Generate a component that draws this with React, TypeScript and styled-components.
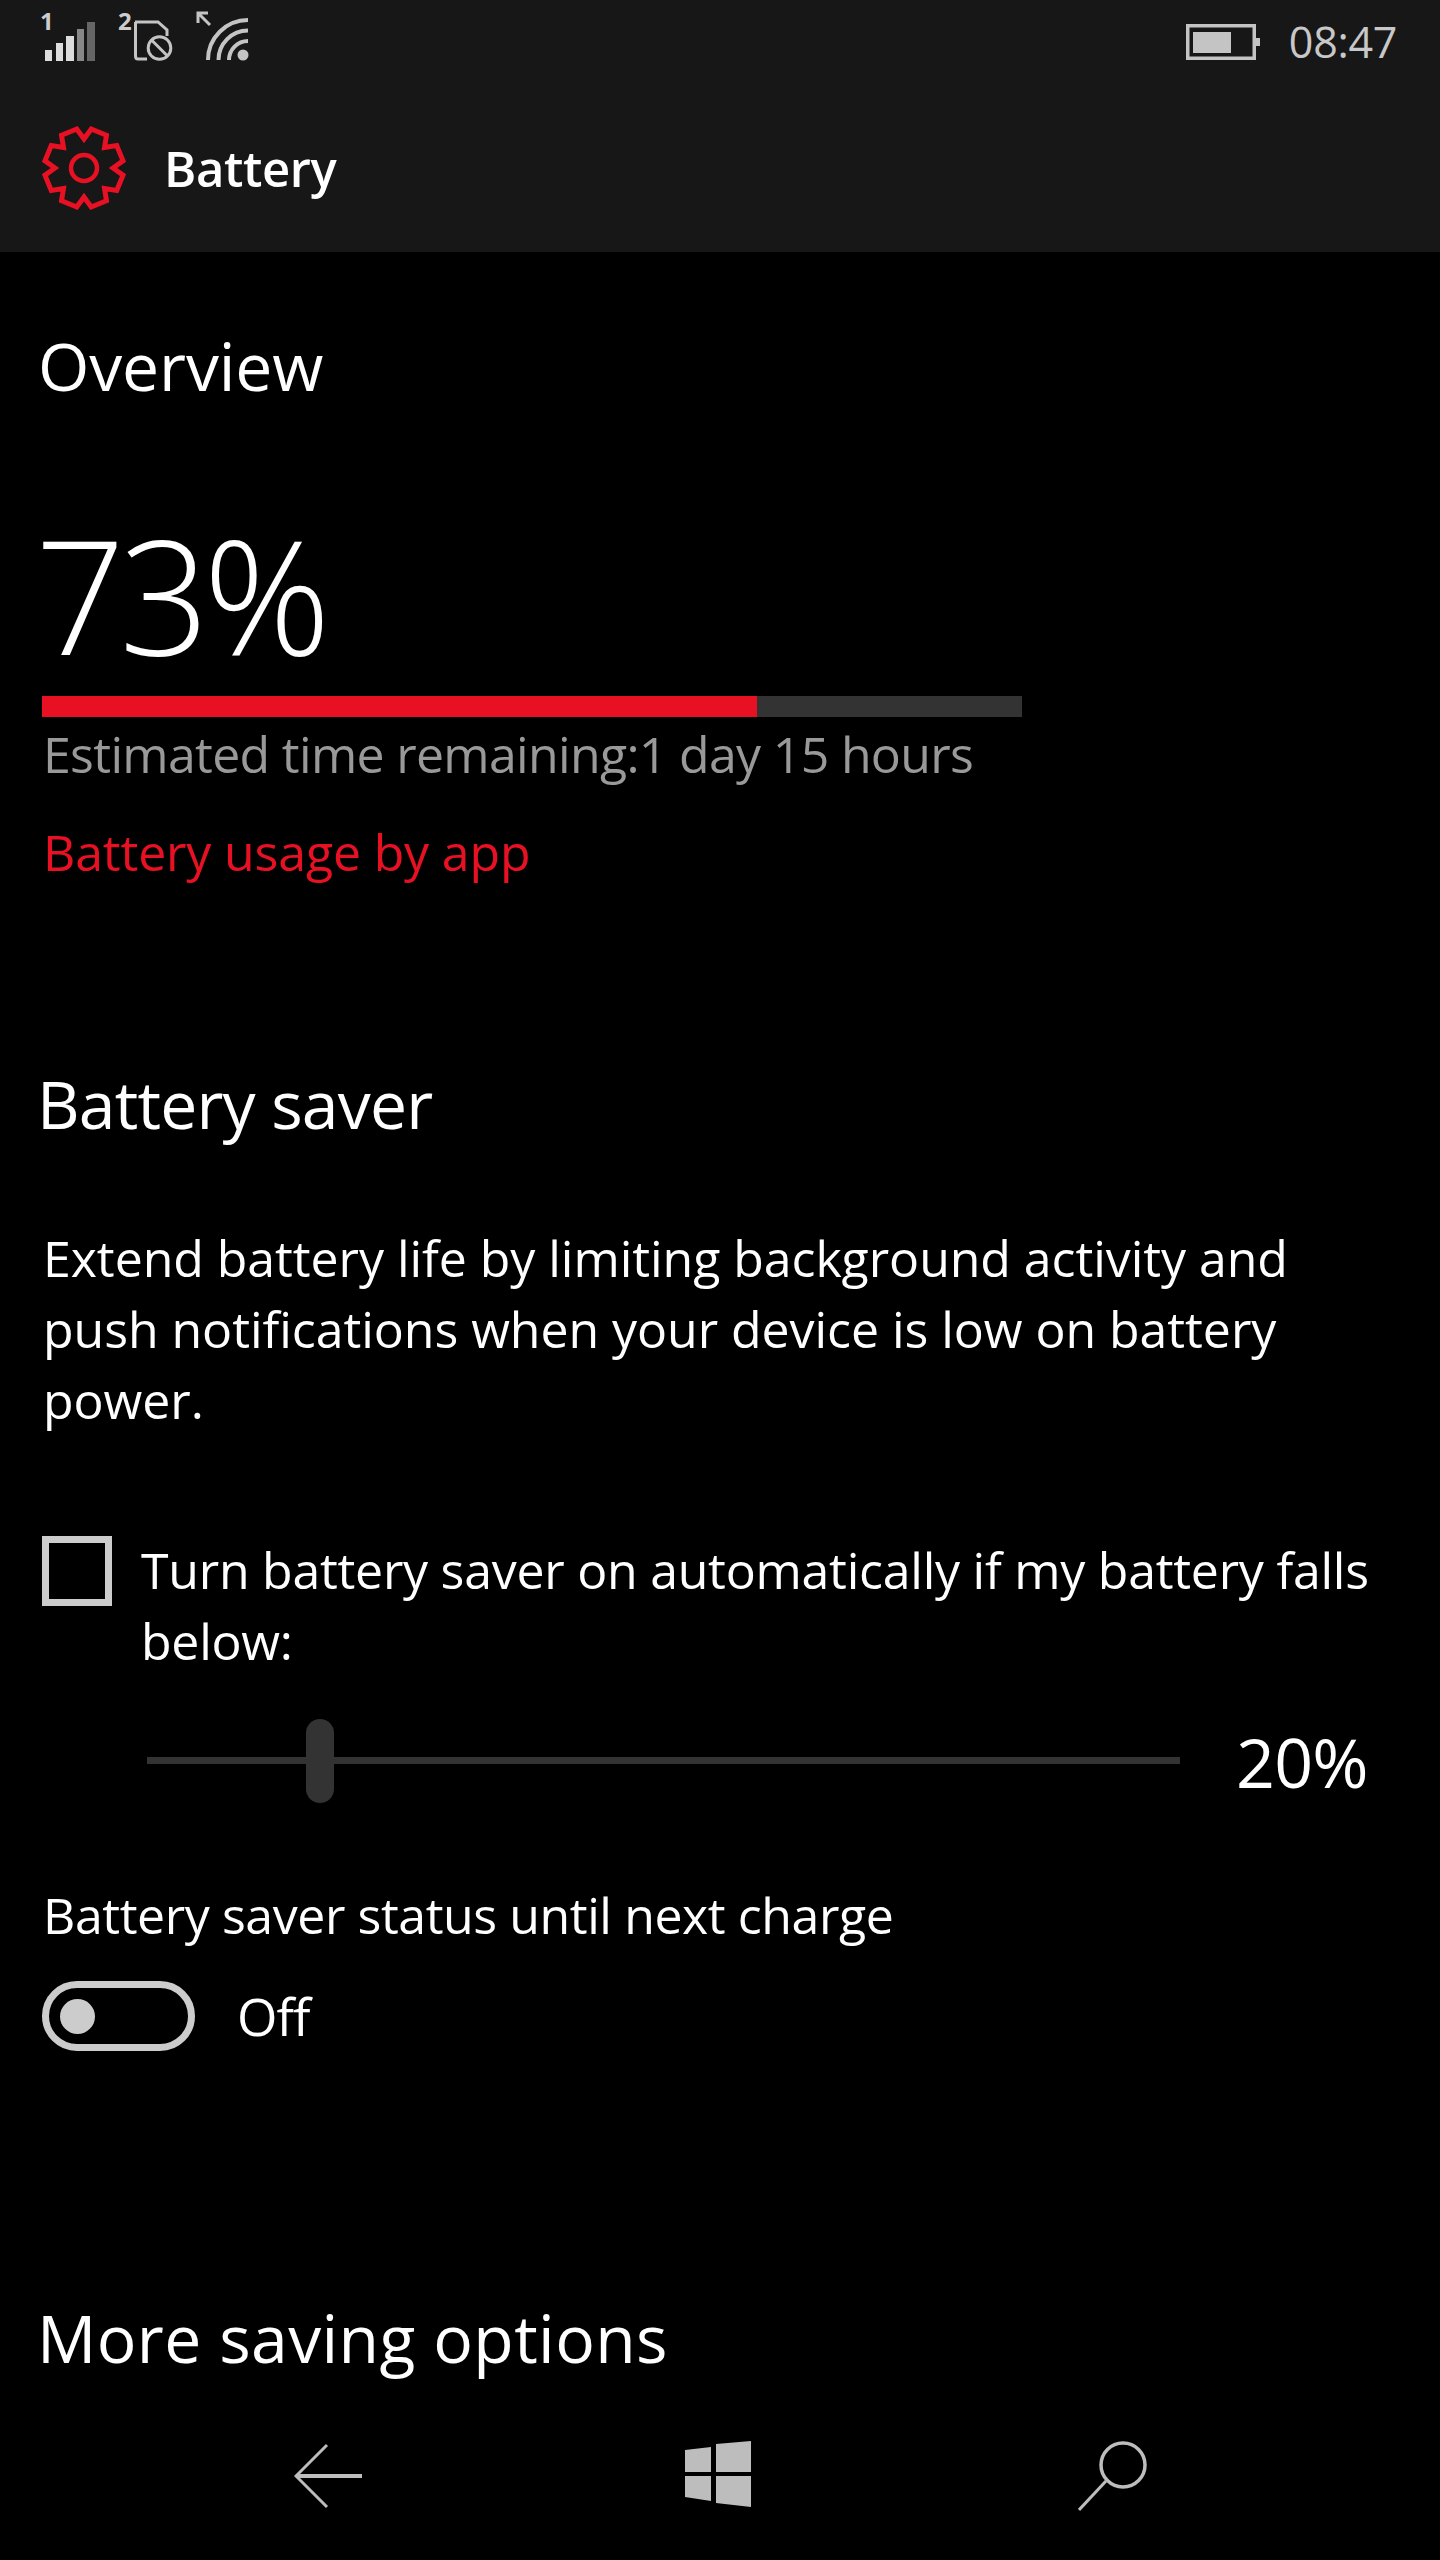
import React from "react";
import styled, { createGlobalStyle } from "styled-components";

const Global = createGlobalStyle`
  html, body { margin: 0; padding: 0; background: #000; }
  * { box-sizing: border-box; }
`;

const RED = "#e81123";
const font = `"Open Sans", "Noto Sans", "Liberation Sans", sans-serif`;

const Page = styled.div`
  width: 1440px;
  height: 2560px;
  display: flex;
  flex-direction: column;
  background: #000;
  color: #fff;
  font-family: ${font};
  overflow: hidden;
`;
const Header = styled.header`
  height: 252px;
  flex: none;
  background: #171717;
  display: flex;
  flex-direction: column;
`;
const StatusBar = styled.div`
  height: 84px;
  padding: 0 43px 0 40px;
  display: flex;
  align-items: flex-start;
  justify-content: space-between;
`;
const StatusIcons = styled.div`
  display: flex;
  align-items: flex-start;
`;
const StatusRight = styled.div`
  display: flex;
  align-items: center;
  gap: 29px;
  height: 84px;
  color: #c8c8c8;
  font-size: 43px;
  font-weight: 400;
  letter-spacing: -0.3px;
`;
const TimeText = styled.span`
  line-height: 60px;
`;
const TitleBar = styled.div`
  display: flex;
  align-items: center;
  height: 168px;
  padding: 0 0 0 40px;
  gap: 36px;
`;
const Title = styled.h1`
  margin: 0;
  font-size: 49px;
  font-weight: 600;
  line-height: 64px;
  letter-spacing: -0.4px;
`;
const Main = styled.main`
  flex: 1;
  min-height: 0;
  overflow: hidden;
  padding: 0 0 0 40px;
`;
const SectionTitle = styled.h2<{ $top: number; $spacing: number; $left: number }>`
  margin: ${(p) => p.$top}px 0 0 ${(p) => p.$left}px;
  font-size: 66px;
  font-weight: 400;
  line-height: 84px;
  letter-spacing: ${(p) => p.$spacing}px;
`;
const BigValue = styled.div`
  margin: 92px 0 0 -5px;
  font-size: 158px;
  font-weight: 300;
  line-height: 190px;
  letter-spacing: -6px;
  height: 190px;
`;
const Meter = styled.div`
  margin: 7px 0 0 2px;
  width: 980px;
  height: 21px;
  background: #333;
`;
const MeterFill = styled.div`
  height: 100%;
  background: ${RED};
`;
const Remaining = styled.div`
  margin: 2px 0 0 3px;
  color: #999;
  font-size: 50px;
  line-height: 70px;
  font-weight: 400;
  letter-spacing: -0.68px;
  white-space: nowrap;
`;
const UsageLink = styled.a`
  display: block;
  margin: 28px 0 0 3px;
  color: ${RED};
  font-size: 50px;
  line-height: 70px;
  letter-spacing: -0.15px;
`;
const Body = styled.p`
  margin: 78px 0 0 3px;
  width: 1320px;
  font-size: 50px;
  line-height: 71px;
  letter-spacing: -0.05px;
`;
const CheckRow = styled.label`
  margin: 100px 0 0 2px;
  display: flex;
  align-items: flex-start;
  gap: 29px;
`;
const CheckBox = styled.span`
  flex: none;
  width: 70px;
  height: 70px;
  border: 7px solid #ccc;
`;
const CheckText = styled.span`
  width: 1260px;
  margin-top: -1px;
  font-size: 50px;
  line-height: 71px;
  letter-spacing: -0.25px;
`;
const SliderRow = styled.div`
  margin: 41px 0 0 107px;
  display: flex;
  align-items: center;
  height: 84px;
  gap: 56px;
`;
const Track = styled.div`
  position: relative;
  width: 1033px;
  height: 7px;
  background: #333;
`;
const Thumb = styled.div`
  position: absolute;
  left: 159px;
  top: -38px;
  width: 28px;
  height: 84px;
  border-radius: 14px;
  background: #333;
`;
const SliderValue = styled.div`
  margin-top: 4px;
  font-size: 68px;
  line-height: 84px;
  letter-spacing: -0.7px;
`;
const StatusLabel = styled.div`
  margin: 78px 0 0 3px;
  font-size: 50px;
  line-height: 71px;
  letter-spacing: -0.42px;
`;
const ToggleRow = styled.div`
  margin: 30px 0 0 2px;
  display: flex;
  align-items: center;
  gap: 42px;
`;
const Toggle = styled.div`
  width: 153px;
  height: 70px;
  border: 7px solid #ccc;
  border-radius: 35px;
  display: flex;
  align-items: center;
  padding-left: 11px;
`;
const Knob = styled.div`
  width: 35px;
  height: 35px;
  border-radius: 50%;
  background: #ccc;
`;
const ToggleText = styled.div`
  font-size: 52px;
  line-height: 70px;
  letter-spacing: -1px;
`;
const NavBar = styled.nav`
  flex: none;
  height: 128px;
  background: #000;
  display: grid;
  grid-template-columns: 294px 68px 323px 66px 327px 70px;
  align-items: start;
  padding-top: 9px;
`;
const NavIcon = styled.svg<{ $col: number }>`
  grid-column: ${(p) => p.$col};
  display: block;
`;
const Icon = styled.svg<{ $left?: number }>`
  display: block;
  flex: none;
  margin-left: ${(p) => p.$left ?? 0}px;
`;

function gearPoints() {
  const pts: string[] = [];
  const at = (r: number, deg: number) => {
    const t = ((deg - 90) * Math.PI) / 180;
    return `${(r * Math.cos(t)).toFixed(2)},${(r * Math.sin(t)).toFixed(2)}`;
  };
  for (let k = 0; k < 8; k++) {
    const base = k * 45;
    pts.push(at(29, base), at(39.7, base + 10.5), at(39.7, base + 34.5));
  }
  return pts.join(" ");
}

const Gear = () => (
  <Icon width="88" height="88" viewBox="-44 -44 88 88">
    <polygon points={gearPoints()} fill="none" stroke={RED} strokeWidth="5" strokeLinejoin="miter" />
    <circle r="13" fill="none" stroke={RED} strokeWidth="4.5" />
  </Icon>
);

const SignalIcon = () => (
  <Icon width="62" height="68" viewBox="0 -8 62 68">
    <text x="0" y="22" fontFamily={font} fontWeight="700" fontSize="24" fill="#ccc">1</text>
    <rect x="5" y="42" width="7" height="11" fill="#ddd" />
    <rect x="16" y="35" width="7" height="18" fill="#ddd" />
    <rect x="26" y="28" width="8" height="25" fill="#ddd" />
    <rect x="37" y="21" width="7" height="32" fill="#888" />
    <rect x="47" y="14" width="8" height="39" fill="#666" />
  </Icon>
);

const SimIcon = () => (
  <Icon $left={15} width="60" height="68" viewBox="0 -8 60 68">
    <text x="1" y="22" fontFamily={font} fontWeight="700" fontSize="24" fill="#ccc">2</text>
    <path d="M 18 14 H 41 L 50 22 V 28 M 30 51 H 21 Q 18.5 51 18.5 48 V 14" fill="none" stroke="#c4c4c4" strokeWidth="3" />
    <circle cx="42.5" cy="40" r="11.3" fill="none" stroke="#c4c4c4" strokeWidth="3" />
    <path d="M 35 32.5 L 50 47.5" stroke="#c4c4c4" strokeWidth="3" />
  </Icon>
);

const WifiIcon = () => (
  <Icon $left={18} width="60" height="68" viewBox="0 -8 60 68">
    <path d="M 3 5 L 15 17 M 3 15 V 5 H 13" fill="none" stroke="#c4c4c4" strokeWidth="3" />
    <path d="M 13 52 A 40 40 0 0 1 53 12" fill="none" stroke="#c4c4c4" strokeWidth="4" />
    <path d="M 23.5 52 A 29.5 29.5 0 0 1 53 22.5" fill="none" stroke="#c4c4c4" strokeWidth="4" />
    <path d="M 34 52 A 19 19 0 0 1 53 33" fill="none" stroke="#c4c4c4" strokeWidth="4" />
    <circle cx="48" cy="47" r="5.5" fill="#c4c4c4" />
  </Icon>
);

const BatteryIcon = () => (
  <Icon width="74" height="36" viewBox="0 0 74 36">
    <rect x="1.75" y="1.75" width="66.5" height="32.5" fill="none" stroke="#c4c4c4" strokeWidth="3.5" />
    <rect x="7" y="8" width="38" height="21" fill="#c4c4c4" />
    <rect x="70" y="14" width="4" height="8" fill="#c4c4c4" />
  </Icon>
);

export default function App() {
  return (
    <Page>
      <Global />
      <Header>
        <StatusBar>
          <StatusIcons>
            <SignalIcon />
            <SimIcon />
            <WifiIcon />
          </StatusIcons>
          <StatusRight>
            <BatteryIcon />
            <TimeText>08:47</TimeText>
          </StatusRight>
        </StatusBar>
        <TitleBar>
          <Gear />
          <Title>Battery</Title>
        </TitleBar>
      </Header>
      <Main>
        <SectionTitle $top={71} $spacing={-0.1} $left={-2}>Overview</SectionTitle>
        <BigValue>73%</BigValue>
        <Meter>
          <MeterFill style={{ width: "73%" }} />
        </Meter>
        <Remaining>Estimated time remaining:1 day 15 hours</Remaining>
        <UsageLink>Battery usage by app</UsageLink>
        <SectionTitle $top={174} $spacing={-0.8} $left={-3}>Battery saver</SectionTitle>
        <Body>Extend battery life by limiting background activity and push notifications when your device is low on battery power.</Body>
        <CheckRow>
          <CheckBox />
          <CheckText>Turn battery saver on automatically if my battery falls below:</CheckText>
        </CheckRow>
        <SliderRow>
          <Track>
            <Thumb />
          </Track>
          <SliderValue>20%</SliderValue>
        </SliderRow>
        <StatusLabel>Battery saver status until next charge</StatusLabel>
        <ToggleRow>
          <Toggle>
            <Knob />
          </Toggle>
          <ToggleText>Off</ToggleText>
        </ToggleRow>
        <SectionTitle $top={244} $spacing={0.4} $left={-3}>More saving options</SectionTitle>
      </Main>
      <NavBar>
        <NavIcon $col={2} width="68" height="70" viewBox="0 0 68 70">
          <path d="M 33 4 L 2 35 L 33 66" fill="none" stroke="#bdbdbd" strokeWidth="3" />
          <path d="M 2 35 H 68" fill="none" stroke="#bdbdbd" strokeWidth="4" />
        </NavIcon>
        <NavIcon $col={4} width="66" height="70" viewBox="0 0 66 70">
          <path fill="#bdbdbd" d="M 0 9 L 26 6 V 31 H 0 Z M 31 3 L 66 0 V 31 H 31 Z M 0 35 H 26 V 60 L 0 56 Z M 31 35 H 66 V 66 L 31 62 Z" />
        </NavIcon>
        <NavIcon $col={6} width="70" height="72" viewBox="0 0 70 72">
          <circle cx="45" cy="24" r="22" fill="none" stroke="#bdbdbd" strokeWidth="3.5" />
          <path d="M 28 40 L 1 69" fill="none" stroke="#bdbdbd" strokeWidth="3" />
        </NavIcon>
      </NavBar>
    </Page>
  );
}
